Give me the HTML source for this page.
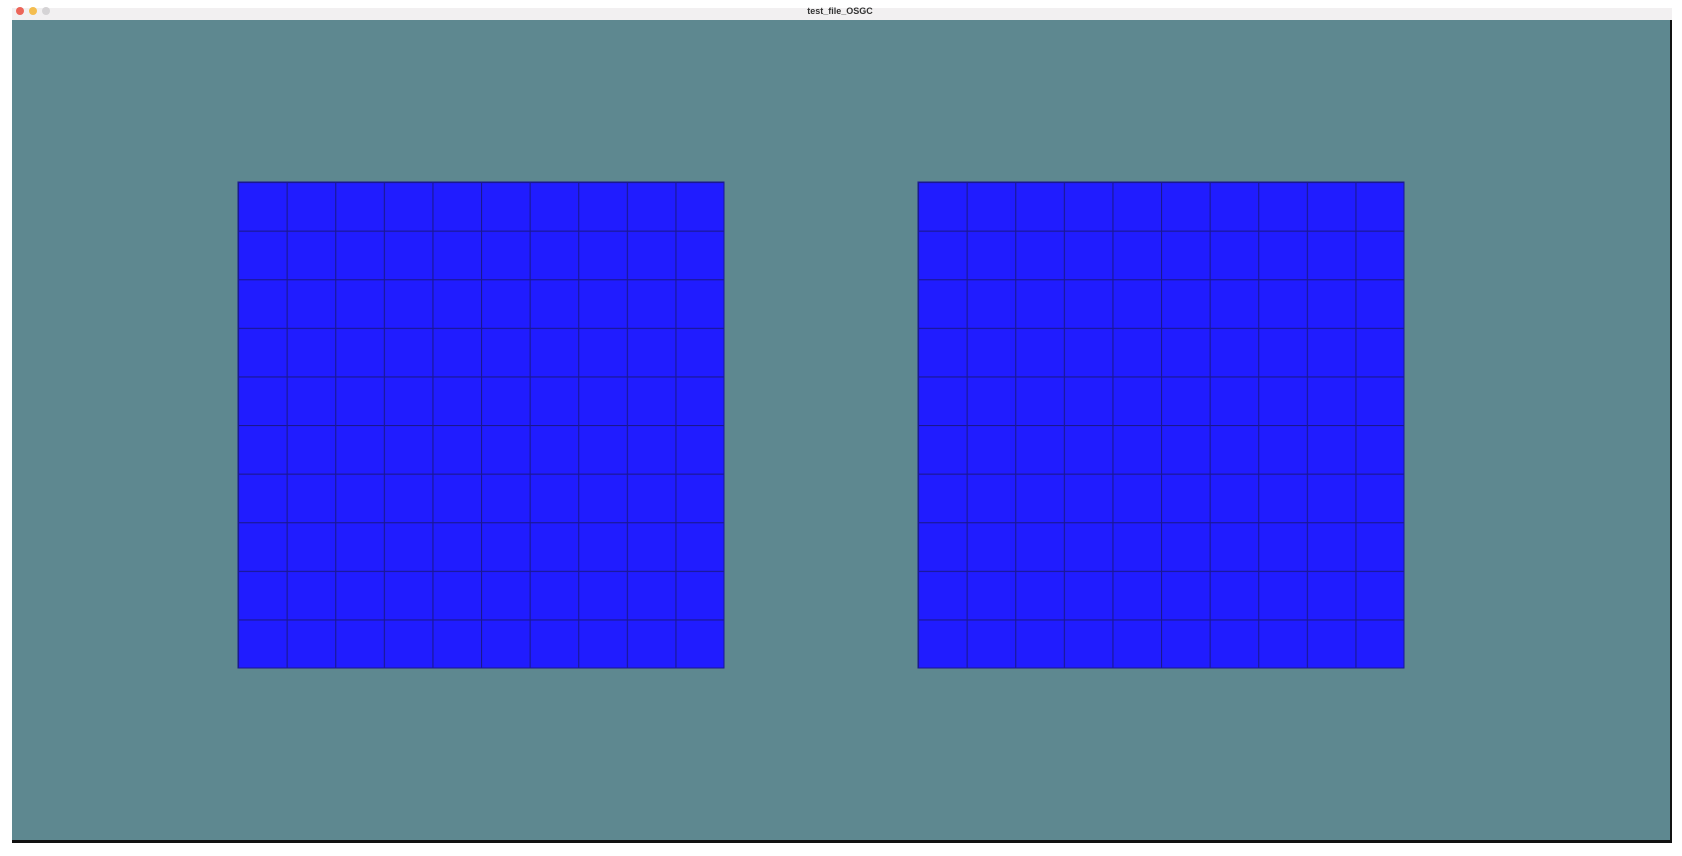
<!DOCTYPE html>
<html><head><meta charset="utf-8"><style>
html,body{margin:0;padding:0;background:#fff;width:1682px;height:856px;overflow:hidden}
</style></head><body>
<svg width="1682" height="856" viewBox="0 0 1682 856" xmlns="http://www.w3.org/2000/svg">
<defs>
<pattern id="g" x="238" y="182" width="48.6" height="48.6" patternUnits="userSpaceOnUse">
<rect width="48.6" height="48.6" fill="#201cff"/>
<path d="M0 0.5H48.6M0.5 0V48.6" stroke="#1a1890" stroke-width="1.2" fill="none"/>
</pattern>
<pattern id="g2" x="918" y="182" width="48.6" height="48.6" patternUnits="userSpaceOnUse">
<rect width="48.6" height="48.6" fill="#201cff"/>
<path d="M0 0.5H48.6M0.5 0V48.6" stroke="#1a1890" stroke-width="1.2" fill="none"/>
</pattern>
</defs>
<rect x="12" y="8" width="1660" height="12" fill="#f2f0f1"/>
<circle cx="20" cy="11" r="4" fill="#ec6559"/>
<circle cx="33" cy="11" r="4" fill="#f4bd4f"/>
<circle cx="46" cy="11" r="4" fill="#d5d3d5"/>
<text x="840" y="14" text-anchor="middle" font-family="Liberation Sans, sans-serif" font-weight="bold" font-size="9" fill="#333">test_file_OSGC</text>
<rect x="12" y="20" width="1660" height="823" fill="#111"/>
<rect x="12" y="20" width="1658" height="820" fill="#5e8890"/>
<rect x="238" y="182" width="486" height="486" fill="url(#g)" stroke="#1a1890" stroke-width="1"/>
<rect x="918" y="182" width="486" height="486" fill="url(#g2)" stroke="#1a1890" stroke-width="1"/>
</svg>
</body></html>
